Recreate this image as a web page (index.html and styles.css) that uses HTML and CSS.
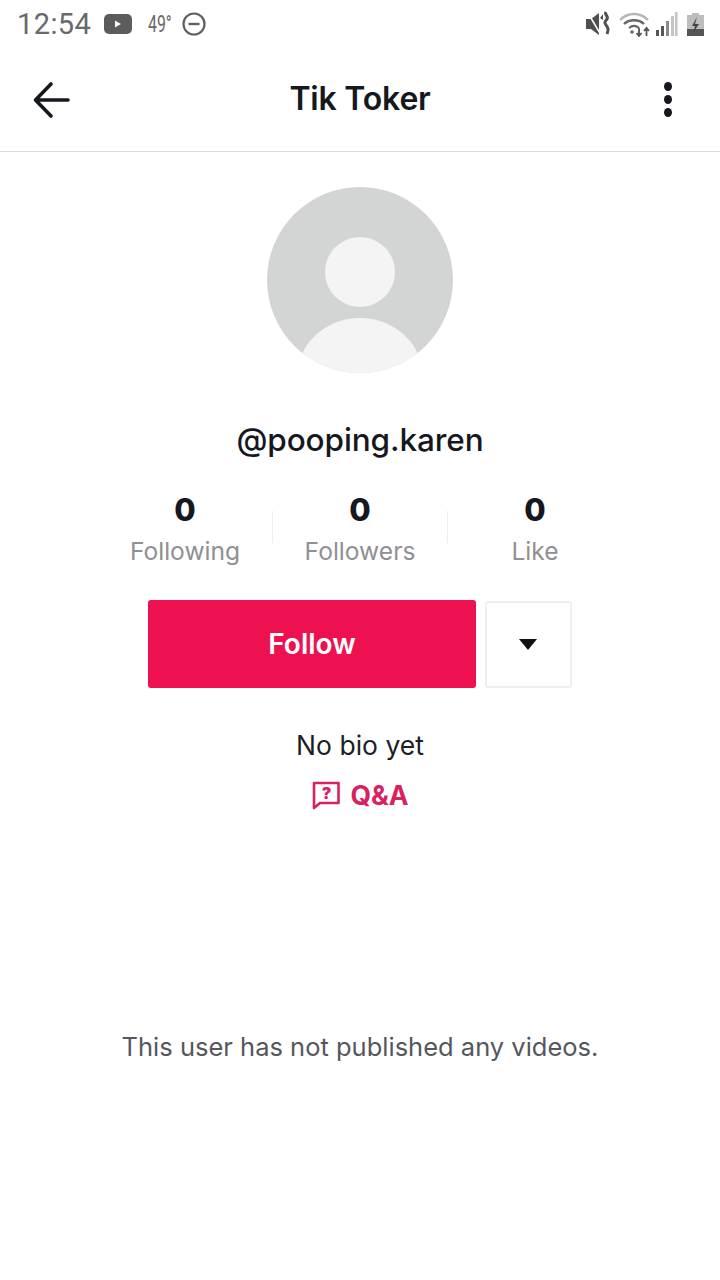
FILE: index.html
```html
<!DOCTYPE html>
<html lang="en">
<head>
<meta charset="utf-8">
<title>Tik Toker</title>
<link rel="stylesheet" href="styles.css">
</head>
<body>
<div class="status">
  <div class="status-left">
    <span class="time">12:54</span>
    <svg class="yt" width="28" height="20" viewBox="0 0 28 20"><rect width="28" height="20" rx="5" fill="#5c5c5c"/><path d="M11 6.500v7l6-3.500z" fill="#fff"/></svg>
    <span class="temp">49°</span>
    <svg class="dnd" width="24" height="24" viewBox="0 0 24 24"><circle cx="12" cy="12" r="10.500" fill="none" stroke="#5f5f5f" stroke-width="2.200"/><path d="M6.500 12h11" stroke="#5f5f5f" stroke-width="2.400"/></svg>
  </div>
  <div class="status-right">
    <svg width="25" height="26" viewBox="0 0 25 26"><path d="M0 8h5l8-6v22l-8-6H0z" fill="#4f4f4f"/><path d="M2 2l13 22" stroke="#fff" stroke-width="1.500"/><path d="M20 1c-2 3 3 4 1 7s-3 3-1 6 3 4 1 9" fill="none" stroke="#4f4f4f" stroke-width="3"/><path d="M14 7l3-4v6z" fill="#4f4f4f"/></svg>
    <svg class="wifi" width="36" height="26" viewBox="0 0 36 26"><path d="M1 9c8-8 20-8 28 0" fill="none" stroke="#b5b5b5" stroke-width="2.400"/><path d="M5 13c5-5 15-5 20 0" fill="none" stroke="#666" stroke-width="2.400"/><path d="M10 17c3-2.500 7-2.500 10 0" fill="none" stroke="#666" stroke-width="2.200"/><circle cx="13" cy="21" r="1.800" fill="#666"/><path d="M20 17v8m-2.500-3l2.500 3 2.500-3M27.500 25v-8m-2.500 3l2.500-3 2.500 3" fill="none" stroke="#555" stroke-width="1.800"/></svg>
    <svg class="signal" width="22" height="26" viewBox="0 0 22 26"><g fill="#555"><rect x="0" y="19" width="3" height="6"/><rect x="5" y="15" width="3" height="10"/></g><rect x="10" y="10" width="3" height="15" fill="#8a8a8a"/><g fill="#c4c4c4"><rect x="15" y="5" width="3" height="20"/><rect x="19" y="1" width="2.500" height="24"/></g></svg>
    <svg class="battery" width="18" height="26" viewBox="0 0 18 26"><path d="M5 2h7v2h5v21H0V4h5z" fill="#bdbdbd"/><path d="M0 18h17v7H0z" fill="#555"/><path d="M10 6l-5 9h3l-2 7 6-9H8z" fill="#444"/></svg>
  </div>
</div>
<header class="topbar">
  <svg class="back" width="40" height="40" viewBox="0 0 40 40"><path d="M4 20h32M19 4L3.500 20 19 36" fill="none" stroke="#16181f" stroke-width="3.600" stroke-linecap="round" stroke-linejoin="round"/></svg>
  <h1 class="title">Tik Toker</h1>
  <div class="dots"><i></i><i></i><i></i></div>
</header>
<main class="profile">
  <svg class="avatar" width="186" height="186" viewBox="0 0 186 186">
    <defs><clipPath id="c"><circle cx="93" cy="93" r="93"/></clipPath></defs>
    <circle cx="93" cy="93" r="93" fill="#d3d4d4"/>
    <circle cx="93" cy="85" r="35" fill="#f4f4f4"/>
    <ellipse cx="93" cy="190" rx="63" ry="59" fill="#f4f4f4" clip-path="url(#c)"/>
  </svg>
  <div class="username">@pooping.karen</div>
  <div class="stats">
    <div class="stat"><b>0</b><span>Following</span></div>
    <div class="stat"><b>0</b><span>Followers</span></div>
    <div class="stat"><b>0</b><span>Like</span></div>
  </div>
  <div class="actions">
    <div class="follow">Follow</div>
    <div class="more"><i class="caret"></i></div>
  </div>
  <div class="bio">No bio yet</div>
  <div class="qa">
    <svg width="30" height="30" viewBox="0 0 30 30"><path d="M3 3h24.500v20H9l-6 5z" fill="none" stroke="#d8215f" stroke-width="2.600" stroke-linejoin="round"/><text class="qmark" x="15.500" y="18.500" text-anchor="middle">?</text></svg>
    <span>Q&amp;A</span>
  </div>
  <div class="empty">This user has not published any videos.</div>
</main>
</body>
</html>
```
FILE: styles.css
```css
* { box-sizing: border-box; }
html, body { margin: 0; padding: 0; }
body { width: 720px; height: 1280px; background: #fff; overflow: hidden; font-family: "Inter", "Liberation Sans", sans-serif; color: #16181f; }
.status { height: 48px; display: flex; justify-content: space-between; align-items: center; padding: 0 15px 0 17px; }
.status-left { display: flex; align-items: center; }
.status-right { display: flex; align-items: center; }
.wifi { margin-left: 8px; }
.signal { margin-left: 1px; }
.battery { margin-left: 9px; }
.time { font: 400 29px "Roboto", sans-serif; color: #696969; letter-spacing: .4px; }
.yt { margin-left: 13px; }
.temp { font: 400 24px "Roboto", sans-serif; color: #696969; margin-left: 16px; transform: scaleX(.66); transform-origin: left; width: 26px; }
.dnd { margin-left: 8px; }
.topbar { height: 104px; display: grid; grid-template-columns: 1fr auto 1fr; align-items: center; padding: 0 32px; border-bottom: 1px solid #dcdcdc; }
.back { margin-top: 1px; }
.title { margin: -2px 0 0; font-size: 32px; font-weight: 600; letter-spacing: -.2px; }
.dots { display: flex; flex-direction: column; gap: 4px; margin: 0 16px 0 0; justify-self: end; }
.dots i { width: 8px; height: 9px; background: #16181f; border-radius: 50%; }
.profile { display: flex; flex-direction: column; align-items: center; padding-top: 35px; }
.avatar { display: block; }
.username { margin-top: 48px; font-size: 31.500px; font-weight: 500; line-height: 38px; letter-spacing: -.1px; }
.stats { display: flex; margin-top: 32px; }
.stat { width: 175px; display: flex; flex-direction: column; align-items: center; position: relative; }
.stat + .stat::before { content: ""; position: absolute; left: -1px; top: 20px; height: 32px; width: 1px; background: #efefef; }
.stat b { font-size: 31px; font-weight: 800; line-height: 38px; }
.stat span { font-size: 24.600px; color: #8f9094; line-height: 32px; margin-top: 6px; }
.actions { display: flex; align-items: center; gap: 9px; margin-top: 33px; }
.follow { width: 328px; height: 88px; background: #ee1150; border-radius: 3px; color: #fff; font-size: 28px; font-weight: 600; display: flex; align-items: center; justify-content: center; }
.more { width: 87px; height: 87px; border: 2px solid #efefef; border-radius: 3px; display: flex; align-items: center; justify-content: center; padding-right: 2px; }
.caret { width: 0; height: 0; border-left: 9px solid transparent; border-right: 9px solid transparent; border-top: 11px solid #111; }
.bio { margin-top: 41px; font-size: 26.500px; line-height: 32px; color: #1d1f26; }
.qa { margin-top: 18px; display: flex; align-items: center; gap: 9px; color: #d8215f; font-size: 26.500px; font-weight: 700; line-height: 32px; }
.qmark { font-size: 16px; font-weight: 900; fill: #d8215f; }
.empty { margin-top: 219px; font-size: 25.500px; line-height: 34px; color: #55575c; }
```
